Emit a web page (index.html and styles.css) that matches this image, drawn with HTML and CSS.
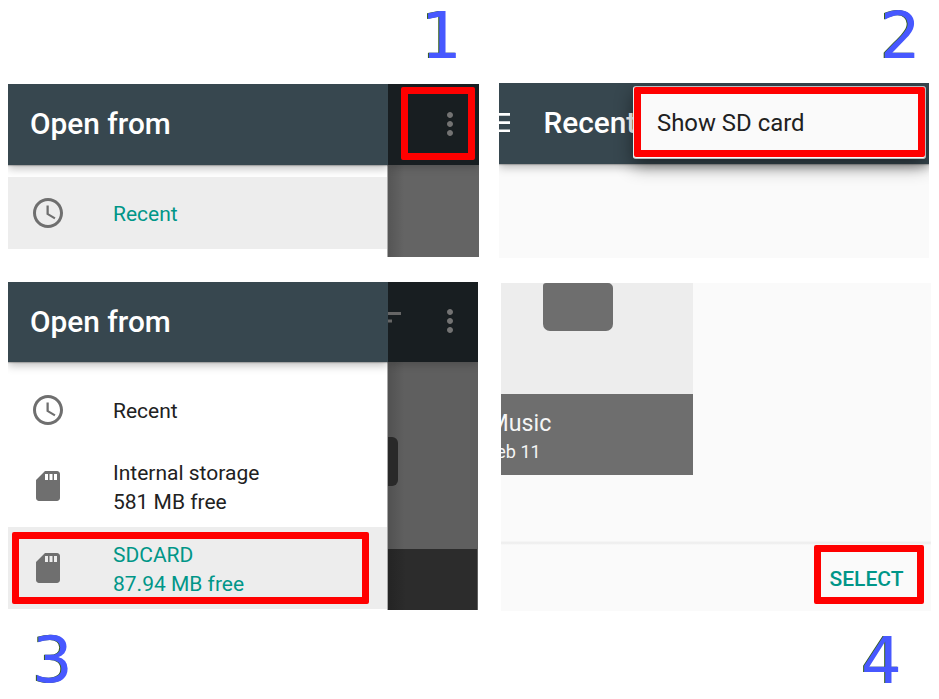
FILE: index.html
```html
<!DOCTYPE html>
<html lang="en">
<head>
<meta charset="utf-8">
<title>Select the SD card</title>
<link rel="stylesheet" href="styles.css">
</head>
<body>
<svg width="0" height="0" class="defs">
  <symbol id="clock" viewBox="0 0 24 24"><path d="M11.99 2C6.47 2 2 6.48 2 12s4.47 10 9.99 10C17.52 22 22 17.52 22 12S17.52 2 11.99 2zM12 20c-4.42 0-8-3.58-8-8s3.58-8 8-8 8 3.58 8 8-3.58 8-8 8zm.5-13H11v6l5.25 3.15.75-1.23-4.5-2.67z"/></symbol>
  <symbol id="sd" viewBox="0 0 24 24"><path d="M18 2h-8L4.02 8 4 20c0 1.1.9 2 2 2h12c1.1 0 2-.9 2-2V4c0-1.1-.9-2-2-2zm-6 6h-2V4h2v4zm3 0h-2V4h2v4zm3 0h-2V4h2v4z"/></symbol>
  <symbol id="more" viewBox="0 0 24 24"><path d="M12 8c1.1 0 2-.9 2-2s-.9-2-2-2-2 .9-2 2 .9 2 2 2zm0 2c-1.1 0-2 .9-2 2s.9 2 2 2 2-.9 2-2-.9-2-2-2zm0 6c-1.1 0-2 .9-2 2s.9 2 2 2 2-.9 2-2-.9-2-2-2z"/></symbol>
</svg>
<main class="steps">
  <div class="column left">
    <div class="number n1">1</div>
    <section class="panel p1">
      <div class="drawer">
        <header class="bar"><h2>Open from</h2></header>
        <div class="row single active"><svg class="icon"><use href="#clock"/></svg><span>Recent</span></div>
      </div>
      <div class="behind">
        <div class="dimbar"><svg class="more"><use href="#more"/></svg></div>
      </div>
      <div class="mark m1"></div>
    </section>
    <section class="panel p3">
      <div class="drawer">
        <header class="bar"><h2>Open from</h2></header>
        <div class="row single"><svg class="icon"><use href="#clock"/></svg><span>Recent</span></div>
        <div class="row"><svg class="icon"><use href="#sd"/></svg><span>Internal storage<br>581 MB free</span></div>
        <div class="row active"><svg class="icon"><use href="#sd"/></svg><span>SDCARD<br>87.94 MB free</span></div>
      </div>
      <div class="behind">
        <div class="dimbar">
          <svg class="sort" width="14" height="12"><path d="M0 1h13v3H0zM0 8.5h4v3H0z"/></svg>
          <svg class="more"><use href="#more"/></svg>
        </div>
        <div class="dimfolder"></div>
        <div class="dimcaption"></div>
      </div>
      <div class="mark m3"></div>
    </section>
    <div class="number n3">3</div>
  </div>
  <div class="column right">
    <div class="number n2">2</div>
    <section class="panel p2">
      <header class="bar">
        <svg class="burger" width="12" height="20"><path d="M0 0h11v2.7H0zM0 8.2h11v2.7H0zM0 16.4h11v2.7H0z"/></svg>
        <h2>Recent</h2>
      </header>
      <div class="popup"><div class="item">Show SD card</div></div>
    </section>
    <section class="panel p4">
      <div class="tile">
        <div class="preview"><div class="folder"></div></div>
        <div class="caption"><div class="name">Music</div><div class="date">Feb 11</div></div>
      </div>
      <footer class="actions"><span class="select">SELECT</span></footer>
    </section>
    <div class="number n4">4</div>
  </div>
</main>
</body>
</html>
```
FILE: styles.css
```css
* { box-sizing: border-box; }
body {
  margin: 0;
  width: 939px;
  height: 699px;
  overflow: hidden;
  background: #fff;
  font-family: Roboto, "Liberation Sans", sans-serif;
  color: #212121;
}
.defs { position: absolute; }
.steps { display: flex; height: 699px; }
.column { display: flex; flex-direction: column; }
.left { width: 499px; padding-left: 8px; }
.right { width: 440px; }

.number {
  font: 64px/72px "DejaVu Sans", sans-serif;
  color: #4758ff;
  text-shadow: -1px 0 0 #35601c;
}
.n1 { height: 84px; padding-left: 413px; }
.n2 { height: 83px; padding-left: 381px; }
.n3 { padding: 14px 0 0 24px; }
.n4 { padding: 14px 0 0 362px; }

.panel { position: relative; display: flex; overflow: hidden; flex: none; }
.p1 { width: 471px; height: 173px; margin-bottom: 25px; }
.p3 { width: 470px; height: 328px; }
.p2 { width: 430px; height: 175px; margin-bottom: 25px; flex-direction: column; background: #fafafa; }
.p4 { width: 430px; height: 328px; margin-left: 2px; flex-direction: column; background: #fafafa; }

.bar {
  display: flex;
  align-items: center;
  flex: none;
  height: 81px;
  padding-left: 22px;
  background: #37474f;
  box-shadow: 0 1px 1px rgba(0,0,0,.2), 0 3px 9px rgba(0,0,0,.28);
}
.p3 .bar { height: 80px; }
.bar h2 { margin: 0; padding-bottom: 1px; font-size: 29.8px; font-weight: 500; line-height: 36px; color: #fff; }

.drawer {
  position: relative;
  z-index: 1;
  width: 380px;
  overflow: hidden;
  background: linear-gradient(#a8a8a8, #a8a8a8) right / 1px 100% no-repeat #fff;
  flex: none;
}
.row {
  display: flex;
  align-items: center;
  height: 81.5px;
  margin-right: 1px;
  padding-left: 21.5px;
  font-size: 21px;
  line-height: 29px;
}
.row span { margin-left: 47.5px; padding-top: 4px; }
.row.single { height: 71.5px; margin-top: 12px; }
.row.active { background: #ededed; color: #009688; }
.icon { width: 36px; height: 36px; fill: #6f6f6f; }

.behind { flex: 1; }
.p3 .behind { display: flex; flex-direction: column; }
.dimbar {
  display: flex;
  align-items: center;
  height: 81px;
  background: #181e21;
  box-shadow: 0 1px 9px rgba(0,0,0,.25);
}
.p1 .behind { background: linear-gradient(90deg, #555, #646464 16px); }
.p3 .behind { background: linear-gradient(90deg, #515151, #5f5f5f 16px); }
.p3 .dimbar { height: 80px; }
.more { width: 36px; height: 36px; fill: #737373; margin-left: 44px; margin-top: -2px; }
.sort { fill: #666; margin: -10px 0 0 0; }
.p3 .more { margin-left: 30px; }
.dimfolder { width: 10px; height: 49px; margin-top: 75px; border-radius: 0 6px 6px 0; background: #292929; }
.dimcaption { margin-top: 63px; margin-right: 1px; flex: 1; background: linear-gradient(90deg, #242424, #2c2c2c 18px); }

.mark { position: absolute; z-index: 2; border: 7px solid #f00; border-radius: 2px; }
.m1 { left: 393px; top: 3px; width: 74px; height: 73px; }
.m3 { left: 4px; top: 250px; width: 357px; height: 72px; }

.p2 .bar { padding-left: 0; }
.burger { fill: #fff; margin-top: -1px; }
.p2 h2 { margin-left: 32.5px; }
.popup {
  position: absolute;
  left: 134px;
  top: 3px;
  width: 293px;
  height: 73px;
  border: 1px solid #b4bfc2;
  border-left-color: #e8eeee;
  border-radius: 3px;
  background: #fafafa;
  box-shadow: 0 7px 18px rgba(0,0,0,.45);
}
.item {
  height: 70px;
  padding-left: 16px;
  border: 7px solid #f00;
  border-radius: 2px;
  font-size: 23.9px;
  line-height: 59px;
}

.tile { width: 191.5px; }
.preview { display: flex; height: 110.5px; background: #ededed; }
.folder { width: 70px; height: 48px; margin-left: 42px; border-radius: 3px 5px 7px 7px; background: #6e6e6e; }
.caption { height: 81.5px; padding-top: 15px; background: #6e6e6e; color: #f5f5f5; }
.name { margin-left: -12.5px; font-size: 23.2px; line-height: 28px; }
.date { margin-left: -14.5px; padding-top: 1px; font-size: 18px; line-height: 28px; }
.actions {
  display: flex;
  justify-content: flex-end;
  margin-top: auto;
  height: 70px;
  padding: 4px 7px 0 0;
  background: linear-gradient(#f8f8f8, #ececec 2px, #fafafa 4px);
}
.select {
  width: 110px;
  height: 59px;
  border: 7px solid #f00;
  border-radius: 2px;
  padding-left: 8.5px;
  color: #009688;
  font-size: 21px;
  font-weight: 500;
  line-height: 54px;
}
```
